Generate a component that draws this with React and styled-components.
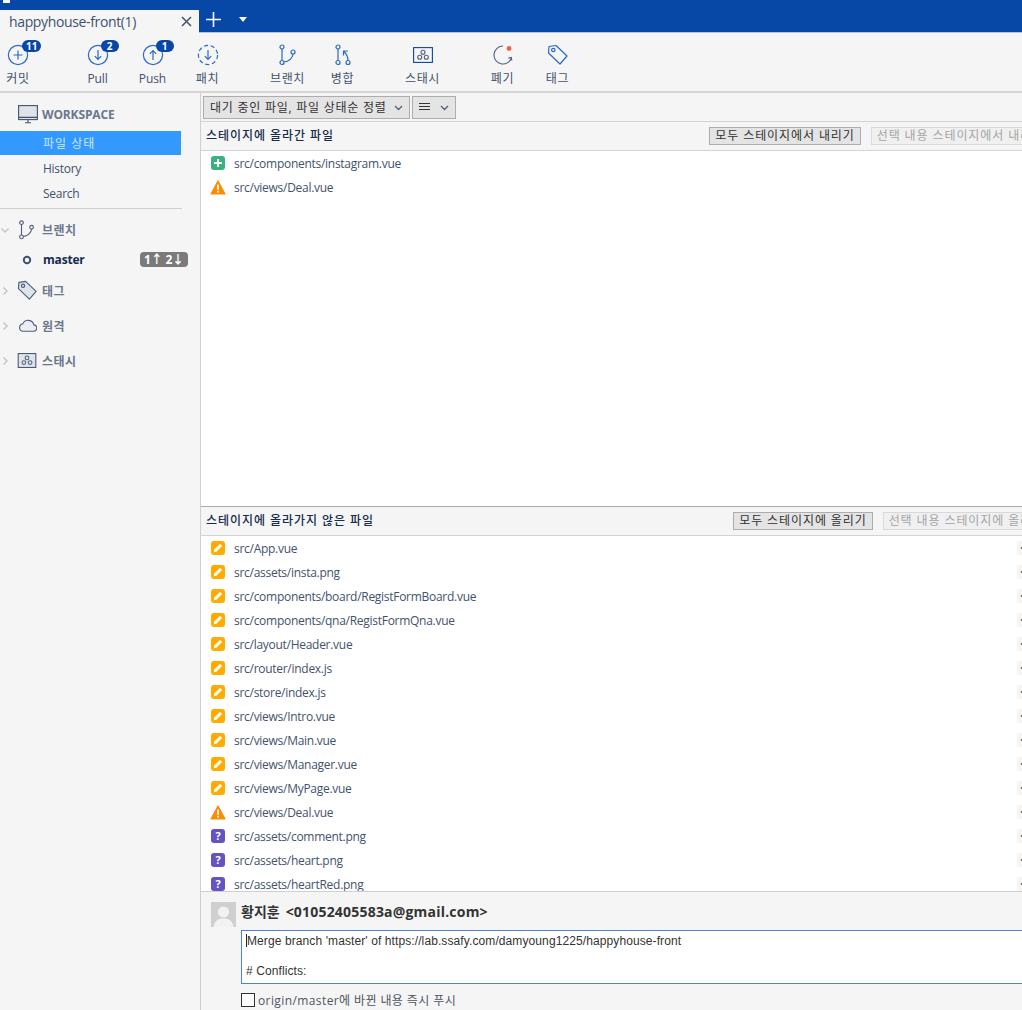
import React from 'react'
import styled, { createGlobalStyle } from 'styled-components'

const stagedFiles = [
  { name: 'src/components/instagram.vue', status: 'added' },
  { name: 'src/views/Deal.vue', status: 'warn' },
]

const unstagedFiles = [
  { name: 'src/App.vue', status: 'modified' },
  { name: 'src/assets/insta.png', status: 'modified' },
  { name: 'src/components/board/RegistFormBoard.vue', status: 'modified' },
  { name: 'src/components/qna/RegistFormQna.vue', status: 'modified' },
  { name: 'src/layout/Header.vue', status: 'modified' },
  { name: 'src/router/index.js', status: 'modified' },
  { name: 'src/store/index.js', status: 'modified' },
  { name: 'src/views/Intro.vue', status: 'modified' },
  { name: 'src/views/Main.vue', status: 'modified' },
  { name: 'src/views/Manager.vue', status: 'modified' },
  { name: 'src/views/MyPage.vue', status: 'modified' },
  { name: 'src/views/Deal.vue', status: 'warn' },
  { name: 'src/assets/comment.png', status: 'unknown' },
  { name: 'src/assets/heart.png', status: 'unknown' },
  { name: 'src/assets/heartRed.png', status: 'unknown' },
]

const GlobalStyle = createGlobalStyle`
  html, body {
    margin: 0;
    padding: 0;
    overflow: hidden;
    background: #f5f5f5;
  }
  * { box-sizing: border-box; }
`

const Page = styled.div`
  width: 1022px;
  height: 1010px;
  overflow: hidden;
  display: flex;
  flex-direction: column;
  background: #f5f5f5;
  color: #333;
  font-family: "Open Sans", "Noto Sans CJK KR", sans-serif;
  font-size: 12px;
`

const TitleBar = styled.div`
  position: relative;
  height: 33px;
  flex: none;
  display: flex;
  align-items: flex-end;
  background: #0747a6;
  border-bottom: 1px solid #b9c4d4;

  &::before {
    content: "";
    position: absolute;
    top: 0;
    left: 3px;
    width: 7px;
    height: 3px;
    background: #fff;
  }
`

const Tab = styled.div`
  width: 199px;
  height: 23px;
  display: flex;
  align-items: center;
  justify-content: space-between;
  padding: 0 7px 0 9px;
  background: #f5f5f5;
  color: #42526e;
  font-size: 14px;
  letter-spacing: -0.36px;
  margin-bottom: -1px;
`

const TitleIcons = styled.div`
  display: flex;
  align-items: center;
  gap: 18px;
  padding: 0 0 3px 7px;
  height: 23px;
`

const Toolbar = styled.div`
  height: 60px;
  flex: none;
  display: flex;
  background: #f5f5f5;
  border-bottom: 2px solid #d4d4d4;
`

const Tool = styled.div`
  position: relative;
  flex: none;
  width: ${p => p.$w || 55}px;
  margin-left: ${p => p.$ml || 0}px;
  display: flex;
  flex-direction: column;
  align-items: center;
  padding-top: 11px;
  color: #505f79;
`

const ToolIcon = styled.div`
  position: relative;
  width: 24px;
  height: 22px;
  display: flex;
  align-items: center;
  justify-content: center;
`

const ToolLabel = styled.div`
  margin-top: 4px;
  font-size: 12px;
  line-height: 18px;
  letter-spacing: ${p => p.$ko ? '0.6px' : '-0.1px'};
  color: #42526e;
  white-space: nowrap;
`

const Badge = styled.span`
  position: absolute;
  top: -4px;
  left: ${p => p.$left}px;
  min-width: ${p => p.$wide ? 19 : 18}px;
  height: 12px;
  padding: 0 4px;
  border-radius: 6px;
  background: #0747a6;
  color: #fff;
  font-size: 10px;
  font-weight: 700;
  line-height: 12px;
  text-align: center;
`

const Body = styled.div`
  flex: 1;
  min-height: 0;
  display: flex;
`

const Sidebar = styled.aside`
  flex: none;
  width: 201px;
  background: #f5f5f5;
  border-right: 1px solid #cfcfcf;
`

const WorkspaceHead = styled.div`
  height: 38px;
  display: flex;
  align-items: center;
  gap: 4px;
  padding: 4px 0 0 18px;
  color: #6b778c;
  font-weight: 700;
  letter-spacing: -0.15px;
`

const NavItem = styled.div`
  width: 181px;
  height: 24px;
  margin-bottom: 1px;
  padding-left: 43px;
  display: flex;
  align-items: center;
  background: ${p => p.$active ? '#3399ff' : 'transparent'};
  color: ${p => p.$active ? '#cfe6ff' : '#42526e'};
  letter-spacing: ${p => p.$active ? '1px' : '-0.28px'};
`

const Divider = styled.div`
  width: 182px;
  height: 1px;
  margin: 3px 0;
  background: #d0d0d0;
`

const TreeHead = styled.div`
  height: 35px;
  display: flex;
  align-items: center;
  color: #6b778c;
  font-weight: 700;
  letter-spacing: 0.5px;
`

const TreeIcon = styled.span`
  width: 26px;
  margin: 0 2px 0 4px;
  display: flex;
  justify-content: center;
  flex: none;
`

const BranchRow = styled.div`
  width: 188px;
  height: 25px;
  margin-bottom: 1px;
  display: flex;
  align-items: center;
  padding-left: 22px;
  color: #172b4d;
  font-weight: 700;
  letter-spacing: -0.2px;
`

const BranchName = styled.span`
  margin-left: 11px;
  flex: 1;
`

const AheadBehind = styled.span`
  width: 48px;
  height: 15px;
  border-radius: 4px;
  background: #7a7a7a;
  color: #fff;
  font-size: 12px;
  font-weight: 700;
  line-height: 15px;
  text-align: center;
  white-space: nowrap;
`

const Main = styled.main`
  flex: none;
  width: 855px;
  display: flex;
  flex-direction: column;
  background: #fff;
`

const FilterBar = styled.div`
  height: 29px;
  flex: none;
  display: flex;
  align-items: center;
  gap: 2px;
  padding: 0 0 0 2px;
  background: #f5f5f5;
  border-bottom: 1px solid #d4d4d4;
`

const Select = styled.div`
  width: ${p => p.$w}px;
  height: 23px;
  display: flex;
  align-items: center;
  justify-content: space-between;
  padding: 0 6px;
  background: #e4e4e4;
  border: 1px solid #adadad;
  color: #333;
  letter-spacing: 0.75px;
  white-space: nowrap;
`

const Section = styled.section`
  height: ${p => p.$h}px;
  flex: none;
  overflow: hidden;
  display: flex;
  flex-direction: column;
  border-top: ${p => p.$split ? '1px solid #a9a9a9' : 'none'};
`

const SectionHead = styled.div`
  height: 29px;
  flex: none;
  display: flex;
  align-items: center;
  justify-content: space-between;
  padding: 0 6px 0 5px;
  background: #f5f5f5;
  border-bottom: 1px solid #d4d4d4;
`

const SectionTitle = styled.h2`
  margin: 0;
  padding-bottom: 2px;
  font-size: 12px;
  font-weight: 500;
  letter-spacing: 0.95px;
  color: #172b4d;
`

const Actions = styled.div`
  display: flex;
  gap: 10px;
`

const ActionButton = styled.button`
  height: 18px;
  padding: 0 5px;
  border: 1px solid ${p => p.disabled ? '#d9d9d9' : '#adadad'};
  background: ${p => p.disabled ? '#f0f0f0' : '#e4e4e4'};
  color: ${p => p.disabled ? '#a5a5a5' : '#333'};
  font-family: inherit;
  font-size: 12px;
  line-height: 16px;
  letter-spacing: 0.9px;
  white-space: nowrap;
`

const FileList = styled.div`
  flex: 1;
  min-height: 0;
  background: #fff;
  overflow: hidden;
`

const FileRow = styled.div`
  height: 24px;
  display: flex;
  align-items: center;
  padding: 0 9px 0 10px;
  color: #42526e;
`

const FileName = styled.span`
  flex: 1;
  margin-left: 9px;
  letter-spacing: -0.28px;
`

const StatusBox = styled.span`
  flex: none;
  width: 14px;
  height: 14px;
  border-radius: 3px;
  display: flex;
  align-items: center;
  justify-content: center;
  background: ${p => p.$bg};
  color: #fff;
  font-size: 11px;
  font-weight: 700;
  line-height: 14px;
`

const MoreButton = styled.span`
  flex: none;
  width: 30px;
  height: 14px;
  padding-left: 3px;
  border-radius: 3px;
  background: #f5f5f5;
  color: #666;
  font-size: 9px;
  line-height: 14px;
  letter-spacing: 1px;
`

const CommitArea = styled.div`
  flex: 1;
  min-height: 0;
  background: #f5f5f5;
  border-top: 1px solid #cfcfcf;
  padding: 10px 0 0 10px;
`

const Author = styled.div`
  height: 25px;
  display: flex;
  align-items: flex-start;
  gap: 5px;
  color: #333;
  font-size: 14px;
  font-weight: 700;
  line-height: 20px;
`

const AuthorEmail = styled.span`
  margin-left: 6px;
  letter-spacing: 0.2px;
`

const Avatar = styled.span`
  flex: none;
  width: 25px;
  height: 25px;
  display: block;
  background: #cfcfcf;
`

const Message = styled.div`
  position: relative;
  height: 54px;
  margin: 3px 0 0 30px;
  padding: 3px 4px;
  background: #fff;
  border: 1px solid #4c86c6;
  color: #333;
  font-family: "Liberation Sans", sans-serif;
  font-size: 12px;
  line-height: 15px;
  letter-spacing: 0.1px;
  white-space: pre;
`

const Caret = styled.span`
  display: inline-block;
  width: 1px;
  height: 13px;
  margin-bottom: -2px;
  background: #222;
`

const PushRow = styled.label`
  height: 16px;
  margin: 8px 0 0 30px;
  display: flex;
  align-items: center;
  gap: 3px;
  color: #4d5561;
  letter-spacing: 0.4px;
`

const CheckBox = styled.span`
  flex: none;
  width: 14px;
  height: 14px;
  background: #fff;
  border: 1px solid #333;
`

const Chevron = ({ open, color = '#c4c4c4' }) => (
  <svg width="10" height="10" viewBox="0 0 10 10" fill="none" stroke={color} strokeWidth="1.4">
    <path d={open ? 'M1.5 3.5 5 7l3.5-3.5' : 'M3.5 1.5 7 5 3.5 8.5'} />
  </svg>
)

const Caret2 = () => (
  <svg width="9" height="9" viewBox="0 0 9 9" fill="none" stroke="#505f79" strokeWidth="1.3">
    <path d="M1 3l3.5 3.5L8 3" />
  </svg>
)

const CircleIcon = ({ dashed, children }) => (
  <svg width="22" height="22" viewBox="0 0 22 22" fill="none" stroke="#2a6ac2" strokeWidth="1.2">
    <circle cx="11" cy="11" r="9.6" strokeDasharray={dashed ? '4.2 2.6' : undefined} />
    {children}
  </svg>
)

const BranchIcon = ({ stroke = '#2a6ac2', size = 24 }) => (
  <svg width={size} height={size} viewBox="0 0 24 24" fill="none" stroke={stroke} strokeWidth="1.2">
    <circle cx="6" cy="4" r="2" />
    <circle cx="6" cy="19.500" r="2" />
    <circle cx="17" cy="9" r="2" />
    <path d="M6 6v11.500M8 19c4.500-.5 8.700-3.700 9-8" />
  </svg>
)

const MergeIcon = () => (
  <svg width="24" height="24" viewBox="0 0 24 24" fill="none" stroke="#2a6ac2" strokeWidth="1.2">
    <circle cx="7" cy="4" r="2" />
    <circle cx="7" cy="19.500" r="2" />
    <circle cx="17" cy="19.500" r="2" />
    <path d="M7 6v11.500M17 17.500c0-3-1-6-4-9M12.500 12.500v-4.500h4.500" />
  </svg>
)

const StashIcon = ({ w = 20, h = 16, fill = 'none', stroke = '#0747a6' }) => (
  <svg width={w} height={h} viewBox="0 0 20 16" fill={fill} stroke={stroke} strokeWidth="1.1">
    <rect x=".6" y=".6" width="18.8" height="14.8" />
    <circle cx="10" cy="5.2" r="2" fill="none" stroke="#505f79" />
    <circle cx="6.7" cy="10.2" r="2" fill="none" stroke="#505f79" />
    <circle cx="13.3" cy="10.2" r="2" fill="none" stroke="#505f79" />
  </svg>
)

const TagIcon = ({ fill = 'none', stroke = '#2a6ac2', size = 22 }) => (
  <svg width={size} height={size} viewBox="0 0 22 22" fill={fill} stroke={stroke} strokeWidth="1.2">
    <path d="M2 2.500 9 1.500l11 10.500-7 8L1.500 9z" strokeLinejoin="round" />
    <circle cx="6.300" cy="6" r="1.700" />
  </svg>
)

const StatusIcon = ({ status }) => {
  if (status === 'warn') {
    return (
      <svg width="16" height="15" viewBox="0 0 16 15" style={{ marginLeft: -1, marginRight: -1 }}>
        <path d="M8 1 15 14H1z" fill="#ff8b00" stroke="#ff8b00" strokeWidth="1.2" strokeLinejoin="round" />
        <rect x="7.100" y="4.600" width="1.800" height="5.200" fill="#fff" />
        <rect x="7.100" y="10.800" width="1.800" height="1.800" fill="#fff" />
      </svg>
    )
  }
  if (status === 'added') {
    return (
      <StatusBox $bg="#36b37e">
        <svg width="10" height="10" viewBox="0 0 10 10" stroke="#fff" strokeWidth="2">
          <path d="M5 1v8M1 5h8" />
        </svg>
      </StatusBox>
    )
  }
  if (status === 'unknown') {
    return <StatusBox $bg="#6554c0">?</StatusBox>
  }
  return (
    <StatusBox $bg="#ffab00">
      <svg width="10" height="10" viewBox="0 0 10 10" fill="#fff">
        <path d="M7 .9 9.100 3 3.400 8.700.8 9.200l.5-2.600z" />
      </svg>
    </StatusBox>
  )
}

const Files = ({ files, more }) => (
  <FileList>
    {files.map((f, i) => (
      <FileRow key={f.name + i}>
        <StatusIcon status={f.status} />
        <FileName>{f.name}</FileName>
        {more && <MoreButton>•••</MoreButton>}
      </FileRow>
    ))}
  </FileList>
)

export default function App() {
  return (
    <Page>
      <GlobalStyle />
      <TitleBar>
        <Tab>
          happyhouse-front(1)
          <svg width="11" height="11" viewBox="0 0 11 11" stroke="#42526e" strokeWidth="1.5">
            <path d="M1 1l9 9M10 1l-9 9" />
          </svg>
        </Tab>
        <TitleIcons>
          <svg width="15" height="15" viewBox="0 0 15 15" stroke="#fff" strokeWidth="1.6">
            <path d="M7.500 0v15M0 7.500h15" />
          </svg>
          <svg width="8" height="5" viewBox="0 0 8 5" fill="#fff">
            <path d="M0 0h8L4 5z" />
          </svg>
        </TitleIcons>
      </TitleBar>

      <Toolbar>
        <Tool $w={36}>
          <ToolIcon>
            <CircleIcon><path d="M11 6.500v9M6.500 11h9" /></CircleIcon>
            <Badge $left={16} $wide>11</Badge>
          </ToolIcon>
          <ToolLabel $ko>커밋</ToolLabel>
        </Tool>
        <Tool $ml={34}>
          <ToolIcon>
            <CircleIcon><path d="M11 6v9.500M7.800 12.200 11 15.500l3.200-3.300" /></CircleIcon>
            <Badge $left={15}>2</Badge>
          </ToolIcon>
          <ToolLabel>Pull</ToolLabel>
        </Tool>
        <Tool>
          <ToolIcon>
            <CircleIcon><path d="M11 16V6.500M7.800 9.800 11 6.500l3.200 3.300" /></CircleIcon>
            <Badge $left={15}>1</Badge>
          </ToolIcon>
          <ToolLabel>Push</ToolLabel>
        </Tool>
        <Tool>
          <ToolIcon>
            <CircleIcon dashed><path d="M11 6v9.500M7.800 12.200 11 15.500l3.200-3.300" /></CircleIcon>
          </ToolIcon>
          <ToolLabel $ko>패치</ToolLabel>
        </Tool>
        <Tool $ml={25}>
          <ToolIcon><BranchIcon /></ToolIcon>
          <ToolLabel $ko>브랜치</ToolLabel>
        </Tool>
        <Tool>
          <ToolIcon><MergeIcon /></ToolIcon>
          <ToolLabel $ko>병합</ToolLabel>
        </Tool>
        <Tool $ml={25}>
          <ToolIcon><StashIcon /></ToolIcon>
          <ToolLabel $ko>스태시</ToolLabel>
        </Tool>
        <Tool $ml={25}>
          <ToolIcon>
            <svg width="22" height="22" viewBox="0 0 22 22" fill="none" stroke="#505f79" strokeWidth="1.1">
              <path d="M11 2a9 9 0 1 0 8.500 12M19.800 16.500l-.5-3-3 .6" />
              <circle cx="17" cy="4.500" r="2.400" fill="#f0604d" stroke="none" />
            </svg>
          </ToolIcon>
          <ToolLabel $ko>폐기</ToolLabel>
        </Tool>
        <Tool>
          <ToolIcon><TagIcon /></ToolIcon>
          <ToolLabel $ko>태그</ToolLabel>
        </Tool>
      </Toolbar>

      <Body>
        <Sidebar>
          <WorkspaceHead>
            <svg width="20" height="19" viewBox="0 0 20 19" fill="#dfe3ea" stroke="#42526e" strokeWidth="1.1">
              <rect x=".6" y=".6" width="18.800" height="14" />
              <path d="M.6 12.400h18.800M7 17.800h6M10 15v2.800" fill="none" />
            </svg>
            WORKSPACE
          </WorkspaceHead>
          <NavItem $active>파일 상태</NavItem>
          <NavItem>History</NavItem>
          <NavItem>Search</NavItem>
          <Divider />
          <TreeHead>
            <Chevron open />
            <TreeIcon><BranchIcon stroke="#505f79" size={22} /></TreeIcon>
            브랜치
          </TreeHead>
          <BranchRow>
            <svg width="10" height="10" viewBox="0 0 10 10" fill="none" stroke="#42526e" strokeWidth="2">
              <circle cx="5" cy="5" r="3.200" />
            </svg>
            <BranchName>master</BranchName>
            <AheadBehind>1↑ 2↓</AheadBehind>
          </BranchRow>
          <TreeHead>
            <Chevron />
            <TreeIcon><TagIcon fill="#dfe3ea" stroke="#505f79" size={21} /></TreeIcon>
            태그
          </TreeHead>
          <TreeHead>
            <Chevron />
            <TreeIcon>
              <svg width="19" height="13" viewBox="0 0 18 12" fill="#eceef2" stroke="#505f79" strokeWidth="1">
                <path d="M4 11.400h10.500a3 3 0 0 0 .5-6 5.500 5.500 0 0 0-10.400-1A3.600 3.600 0 0 0 4 11.400z" />
              </svg>
            </TreeIcon>
            원격
          </TreeHead>
          <TreeHead>
            <Chevron />
            <TreeIcon><StashIcon fill="#dfe3ea" stroke="#42526e" h={15} /></TreeIcon>
            스태시
          </TreeHead>
        </Sidebar>

        <Main>
          <FilterBar>
            <Select $w={207}>
              대기 중인 파일, 파일 상태순 정렬
              <Caret2 />
            </Select>
            <Select $w={44}>
              <svg width="11" height="9" viewBox="0 0 11 9" stroke="#333" strokeWidth="1">
                <path d="M0 .5h11M0 3.500h11M0 6.500h11" />
              </svg>
              <Caret2 />
            </Select>
          </FilterBar>

          <Section $h={384}>
            <SectionHead>
              <SectionTitle>스테이지에 올라간 파일</SectionTitle>
              <Actions>
                <ActionButton>모두 스테이지에서 내리기</ActionButton>
                <ActionButton disabled>선택 내용 스테이지에서 내리기</ActionButton>
              </Actions>
            </SectionHead>
            <Files files={stagedFiles} />
          </Section>

          <Section $h={385} $split>
            <SectionHead>
              <SectionTitle>스테이지에 올라가지 않은 파일</SectionTitle>
              <Actions>
                <ActionButton>모두 스테이지에 올리기</ActionButton>
                <ActionButton disabled>선택 내용 스테이지에 올리기</ActionButton>
              </Actions>
            </SectionHead>
            <Files files={unstagedFiles} more />
          </Section>

          <CommitArea>
            <Author>
              <Avatar>
                <svg width="25" height="25" viewBox="0 0 25 25" fill="#f2f2f2">
                  <circle cx="12.500" cy="10" r="5.600" />
                  <path d="M2.500 25c.5-6 5-8.500 10-8.500s9.500 2.500 10 8.500z" />
                </svg>
              </Avatar>
              <span>황지훈<AuthorEmail>&lt;01052405583a@gmail.com&gt;</AuthorEmail></span>
            </Author>
            <Message>
              <Caret />{"Merge branch 'master' of https://lab.ssafy.com/damyoung1225/happyhouse-front\n\n# Conflicts:"}
            </Message>
            <PushRow>
              <CheckBox />
              origin/master에 바뀐 내용 즉시 푸시
            </PushRow>
          </CommitArea>
        </Main>
      </Body>
    </Page>
  )
}
